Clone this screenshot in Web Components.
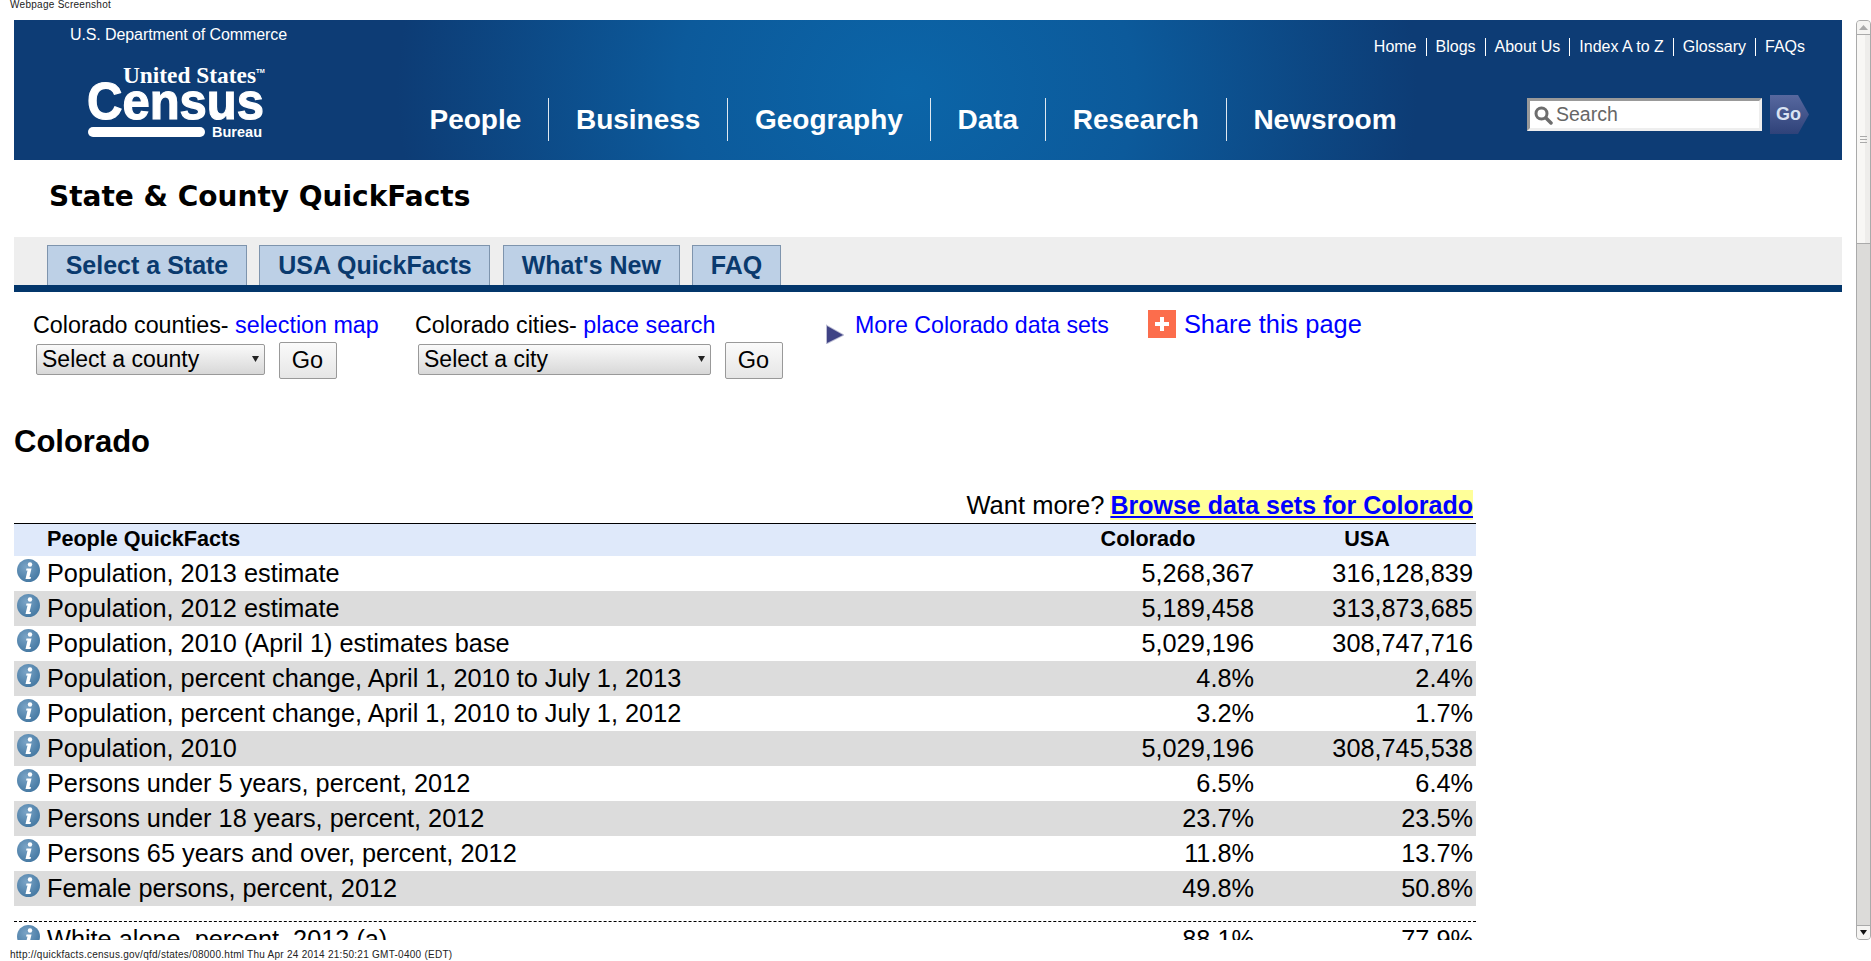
<!DOCTYPE html>
<html lang="en">
<head>
<meta charset="utf-8">
<title>Colorado QuickFacts</title>
<style>
  html, body { margin: 0; padding: 0; background: #fff; overflow: hidden; }
  body { width: 1871px; height: 961px; font-family: "Liberation Sans", Arial, sans-serif; }
</style>
</head>
<body>
<shot-frame caption="Webpage Screenshot" status="http://quickfacts.census.gov/qfd/states/08000.html Thu Apr 24 2014 21:50:21 GMT-0400 (EDT)">
  <census-header></census-header>
  <qf-title>State &amp; County QuickFacts</qf-title>
  <tab-bar>
    <tab-item>Select a State</tab-item>
    <tab-item>USA QuickFacts</tab-item>
    <tab-item>What's New</tab-item>
    <tab-item>FAQ</tab-item>
  </tab-bar>
  <state-tools></state-tools>
  <state-heading>Colorado</state-heading>
  <fact-table>
    <fact-row label="Population, 2013 estimate" state="5,268,367" usa="316,128,839"></fact-row>
    <fact-row shaded label="Population, 2012 estimate" state="5,189,458" usa="313,873,685"></fact-row>
    <fact-row label="Population, 2010 (April 1) estimates base" state="5,029,196" usa="308,747,716"></fact-row>
    <fact-row shaded label="Population, percent change, April 1, 2010 to July 1, 2013" state="4.8%" usa="2.4%"></fact-row>
    <fact-row label="Population, percent change, April 1, 2010 to July 1, 2012" state="3.2%" usa="1.7%"></fact-row>
    <fact-row shaded label="Population, 2010" state="5,029,196" usa="308,745,538"></fact-row>
    <fact-row label="Persons under 5 years, percent, 2012" state="6.5%" usa="6.4%"></fact-row>
    <fact-row shaded label="Persons under 18 years, percent, 2012" state="23.7%" usa="23.5%"></fact-row>
    <fact-row label="Persons 65 years and over, percent, 2012" state="11.8%" usa="13.7%"></fact-row>
    <fact-row shaded label="Female persons, percent, 2012" state="49.8%" usa="50.8%"></fact-row>
    <fact-divider></fact-divider>
    <fact-row label="White alone, percent, 2012 (a)" state="88.1%" usa="77.9%"></fact-row>
  </fact-table>
</shot-frame>

<script>
const sans = '"Liberation Sans", Arial, sans-serif'

// small helper, every element here just renders one template into an open root
class Base extends HTMLElement {
  constructor() {
    super()
    this.attachShadow({ mode: 'open' })
  }
  render(html) {
    this.shadowRoot.innerHTML = html
  }
}

class ShotFrame extends Base {
  connectedCallback() {
    this.render(`
      <style>
        :host { display: flex; flex-direction: column; width: 1871px; height: 961px; color: #000; font-family: ${sans}; }
        .caption, .status { font-size: 10px; padding-left: 10px; color: #222; box-sizing: border-box; flex: none; white-space: nowrap; }
        .caption { height: 20px; line-height: 10px; letter-spacing: .28px; }
        .status { height: 21px; padding-top: 9px; line-height: 12px; letter-spacing: .26px; }
        .view { height: 920px; flex: none; display: flex; padding-left: 14px; }
        .page { width: 1828px; height: 920px; overflow: hidden; flex: none; }
        .gap { width: 14px; flex: none; }
        page-scrollbar { flex: none; }
      </style>
      <div class="caption">${this.getAttribute('caption')}</div>
      <div class="view">
        <div class="page"><slot></slot></div>
        <div class="gap"></div>
        <page-scrollbar></page-scrollbar>
      </div>
      <div class="status">${this.getAttribute('status')}</div>`)
  }
}

class PageScrollbar extends Base {
  connectedCallback() {
    this.render(`
      <style>
        :host { display: flex; flex-direction: column; width: 15px; height: 920px; box-sizing: border-box; background: #dcdbd9; border: 1px solid #aaa; border-radius: 4px; overflow: hidden; }
        .btn { height: 13px; background: #f5f4f2; display: flex; align-items: center; justify-content: center; border-bottom: 1px solid #aaa; flex: none; }
        .thumb { height: 209px; box-sizing: border-box; flex: none; background: linear-gradient(90deg, #f8f7f5 0 60%, #eeedeb 60%); border-bottom: 1px solid #aaa; display: flex; align-items: center; justify-content: center; }
        .grip { width: 7px; height: 7px; background: repeating-linear-gradient(#aaa 0 1px, transparent 1px 3px); }
        .track { flex: 1; }
        .down { border-bottom: 0; border-top: 1px solid #aaa; }
      </style>
      <div class="btn"><svg width="9" height="5"><path d="M4.500 0 9 5H0z" fill="#aaa"/></svg></div>
      <div class="thumb"><div class="grip"></div></div>
      <div class="track"></div>
      <div class="btn down"><svg width="7" height="5"><path d="M0 0h7L3.500 5z" fill="#111"/></svg></div>`)
  }
}

class CensusHeader extends Base {
  connectedCallback() {
    const top = ['Home', 'Blogs', 'About Us', 'Index A to Z', 'Glossary', 'FAQs']
    const nav = ['People', 'Business', 'Geography', 'Data', 'Research', 'Newsroom']
    this.render(`
      <style>
        :host { display: flex; height: 140px; color: #fff; font-family: ${sans}; background: radial-gradient(ellipse 510px 420px at 893px 70px, #0b65a8 0%, #0c5a9b 45%, #0d3c75 100%); background-color: #0d3b73; white-space: nowrap; }
        .brand { width: 389px; flex: none; padding: 6px 0 0 56px; box-sizing: border-box; }
        .dept { font-size: 16px; line-height: 18px; letter-spacing: -.1px; }
        .brand svg { display: block; margin: 12px 0 0 16px; }
        .nav { display: flex; align-items: flex-start; padding-top: 78px; font-size: 28px; font-weight: bold; line-height: 43px; flex: none; margin-left: 26.500px; }
        .nav span { padding: 0 26.800px; border-left: 1px solid #dfe8f0; }
        .nav span:first-child { padding-left: 0; border: 0; }
        .right { flex: 1; min-width: 0; display: flex; flex-direction: column; align-items: flex-end; padding-right: 33px; }
        .top { display: flex; flex: none; margin-top: 18px; font-size: 16px; line-height: 18px; }
        .top span { padding: 0 9px; border-left: 1px solid #fff; }
        .top span:first-child { border: 0; }
        .top span:last-child { padding-right: 4px; }
        .search { display: flex; align-items: center; gap: 8px; margin-top: 39px; }
        .box { width: 235px; height: 33px; box-sizing: border-box; background: #fff; border: 3px solid; border-color: #999 #eee #eee #999; display: flex; align-items: center; gap: 3px; padding-left: 3px; color: #666; font-size: 19.500px; }
        .go { width: 39px; height: 39px; flex: none; }
      </style>
      <div class="brand">
        <div class="dept">U.S. Department of Commerce</div>
        <svg width="186" height="84" viewBox="0 0 186 84" fill="#fff">
          <text x="37" y="27" font-family="'Liberation Serif', serif" font-weight="bold" font-size="23" textLength="133" lengthAdjust="spacingAndGlyphs">United States</text>
          <text x="170" y="17" font-family="${sans}" font-size="6" font-weight="bold">TM</text>
          <text x="1" y="63" font-family="Lato, ${sans}" font-weight="900" font-size="52" stroke="#fff" stroke-width="1.200" textLength="177" lengthAdjust="spacingAndGlyphs">Census</text>
          <rect x="2" y="71" width="117" height="10" rx="5"/>
          <text x="126" y="81" font-family="${sans}" font-weight="bold" font-size="14" textLength="50" lengthAdjust="spacingAndGlyphs">Bureau</text>
        </svg>
      </div>
      <div class="nav">${nav.map(n => `<span>${n}</span>`).join('')}</div>
      <div class="right">
        <div class="top">${top.map(n => `<span>${n}</span>`).join('')}</div>
        <div class="search">
          <div class="box">
            <svg width="20" height="20" viewBox="0 0 20 20" fill="none" stroke="#6d6d6d"><circle cx="8.500" cy="8.500" r="5.500" stroke-width="3"/><path d="M13 13l5 5" stroke-width="3.500" stroke-linecap="round"/></svg>
            <span>Search</span>
          </div>
          <svg class="go" viewBox="0 0 39 39">
            <defs><linearGradient id="g" x1="0" y1="0" x2="0" y2="1"><stop offset="0" stop-color="#57689f"/><stop offset="1" stop-color="#2f4279"/></linearGradient></defs>
            <path d="M0 0H28L39 19.500 28 39H0z" fill="url(#g)"/>
            <text x="6" y="25" font-family="${sans}" font-weight="bold" font-size="18" fill="#d9e2f2">Go</text>
          </svg>
        </div>
      </div>`)
  }
}

class QfTitle extends Base {
  connectedCallback() {
    this.render(`
      <style>
        :host { display: block; height: 77px; padding: 18px 0 0 35px; box-sizing: border-box; font: bold 28px/38px "DejaVu Sans", sans-serif; color: #000; }
      </style>
      <slot></slot>`)
  }
}

class TabBar extends Base {
  connectedCallback() {
    this.render(`
      <style>
        :host { display: flex; height: 55px; box-sizing: border-box; padding: 8px 0 0 33px; gap: 12.500px; background: #eee; border-bottom: 7px solid #03366b; }
      </style>
      <slot></slot>`)
  }
}

class TabItem extends Base {
  connectedCallback() {
    this.render(`
      <style>
        :host { display: block; padding: 0 17.700px; height: 40px; box-sizing: border-box; background: #bdd0e6; border: 1px solid #7e94ad; border-bottom: 0; color: #0a3a6e; font: bold 25px/38px ${sans}; }
      </style>
      <slot></slot>`)
  }
}

class StateTools extends Base {
  connectedCallback() {
    this.render(`
      <style>
        :host { display: flex; height: 132px; box-sizing: border-box; padding: 20px 0 0 19px; font: 23.300px/26px ${sans}; color: #000; white-space: nowrap; }
        a { color: #00f; text-decoration: none; }
        .group { flex: none; }
        .controls { display: flex; align-items: center; margin: 4px 0 0 3px; }
        .select { height: 31px; margin-bottom: 2px; padding: 0 5px 2px 5px; box-sizing: border-box; display: flex; align-items: center; justify-content: space-between; border: 1px solid #999; border-radius: 2px; background: linear-gradient(#fafafa, #d8d8d8); font-size: 23px; }
        .select svg { flex: none; }
        .btn { width: 58px; height: 37px; box-sizing: border-box; margin-left: 13.500px; text-align: center; line-height: 34px; border: 1px solid #999; border-radius: 2px; background: linear-gradient(#fafafa, #e6e6e6); font-size: 23.500px; }
        .more { display: flex; font-size: 23.200px; }
        .more svg { margin: 12px 11px 0 0; flex: none; }
        .share { display: flex; margin: -2px 0 0 39px; font-size: 25.400px; line-height: 28px; }
        .plus { width: 28px; height: 28px; margin-right: 8px; background: #fc6d4c; flex: none; display: flex; align-items: center; justify-content: center; }
      </style>
      <div class="group" style="width:382px">
        Colorado counties- <a>selection map</a>
        <div class="controls">
          <div class="select" style="width:229px"><span>Select a county</span>${this.arrow()}</div>
          <div class="btn">Go</div>
        </div>
      </div>
      <div class="group" style="width:411px">
        Colorado cities- <a>place search</a>
        <div class="controls">
          <div class="select" style="width:293px"><span>Select a city</span>${this.arrow()}</div>
          <div class="btn">Go</div>
        </div>
      </div>
      <div class="more">
        <svg width="18" height="20" viewBox="0 0 18 20"><path d="M1 2 17 11 1 19z" fill="#3f4385" stroke="#3f4385" stroke-opacity=".35" stroke-width="2"/></svg>
        <a>More Colorado data sets</a>
      </div>
      <div class="share">
        <div class="plus"><svg width="16" height="16"><path d="M6 1h4v5h5v4h-5v5H6v-5H1V6h5z" fill="#fff"/></svg></div>
        <a>Share this page</a>
      </div>`)
  }

  arrow() {
    return '<svg width="7" height="6"><path d="M0 0h7L3.500 6z" fill="#222"/></svg>'
  }
}

class StateHeading extends Base {
  connectedCallback() {
    this.render(`
      <style>
        :host { display: block; height: 66px; font: bold 31px/36px ${sans}; color: #000; }
      </style>
      <slot></slot>`)
  }
}

class FactTable extends Base {
  connectedCallback() {
    this.render(`
      <style>
        :host { display: block; width: 1462px; font-family: ${sans}; color: #000; }
        .more { height: 33px; padding-right: 3px; box-sizing: border-box; font-size: 25.500px; line-height: 30px; display: flex; justify-content: flex-end; gap: 6px; }
        .more a { height: 30px; background: #ff9; color: #00f; font-size: 25px; font-weight: bold; text-decoration: underline; }
        .head { display: grid; grid-template-columns: 1fr 180px 219px; align-items: center; height: 33px; padding: 0 4px 2px 33px; box-sizing: border-box; border-top: 1px solid #000; background: #dfe9fa; font-size: 21.600px; font-weight: bold; }
        .state { text-align: center; padding-right: 30px; }
        .usa { text-align: center; padding-left: 9px; }
      </style>
      <div class="more"><span>Want more?</span><a>Browse data sets for Colorado</a></div>
      <div class="head"><span>People QuickFacts</span><span class="state">Colorado</span><span class="usa">USA</span></div>
      <slot></slot>`)
  }
}

class FactRow extends Base {
  connectedCallback() {
    this.render(`
      <style>
        :host { display: grid; grid-template-columns: 1fr 180px 219px; height: 35px; align-items: center; padding: 0 3px 0 3px; box-sizing: border-box; font-size: 25.300px; white-space: nowrap; }
        :host([shaded]) { background: #dcdcdc; }
        .label { display: flex; align-items: center; gap: 7px; }
        info-icon { margin-top: -6px; }
        .num { text-align: right; }
      </style>
      <div class="label"><info-icon></info-icon><span>${this.getAttribute('label')}</span></div>
      <div class="num">${this.getAttribute('state')}</div>
      <div class="num">${this.getAttribute('usa')}</div>`)
  }
}

class FactDivider extends Base {
  connectedCallback() {
    this.render(`
      <style>
        :host { display: block; height: 16px; box-sizing: border-box; border-bottom: 1px dashed #000; }
      </style>`)
  }
}

class InfoIcon extends Base {
  connectedCallback() {
    this.render(`
      <style>
        :host { display: block; width: 23px; height: 23px; flex: none; }
        svg { display: block; }
      </style>
      <svg width="23" height="23" viewBox="0 0 23 23">
        <defs><radialGradient id="b" cx=".4" cy=".35" r=".75"><stop offset="0" stop-color="#7ba4c6"/><stop offset="1" stop-color="#3f749f"/></radialGradient></defs>
        <circle cx="11.500" cy="11.500" r="11.500" fill="url(#b)"/>
        <circle cx="13" cy="5.500" r="2.200" fill="#fff"/>
        <path d="M9.500 9.500h5l-2 8.500h1.500l-.5 2H8.500l2-8.500H9z" fill="#fff"/>
      </svg>`)
  }
}

customElements.define('shot-frame', ShotFrame)
customElements.define('page-scrollbar', PageScrollbar)
customElements.define('census-header', CensusHeader)
customElements.define('qf-title', QfTitle)
customElements.define('tab-bar', TabBar)
customElements.define('tab-item', TabItem)
customElements.define('state-tools', StateTools)
customElements.define('state-heading', StateHeading)
customElements.define('fact-table', FactTable)
customElements.define('fact-row', FactRow)
customElements.define('fact-divider', FactDivider)
customElements.define('info-icon', InfoIcon)
</script>
</body>
</html>
